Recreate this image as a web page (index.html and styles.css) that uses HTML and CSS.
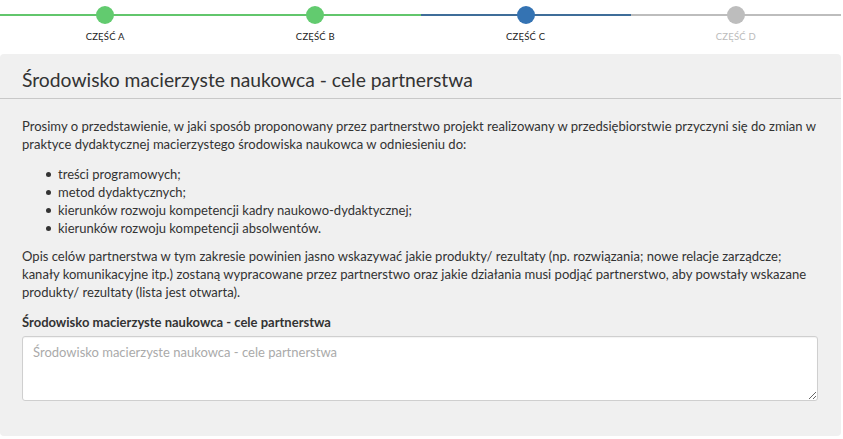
FILE: index.html
```html
<!DOCTYPE html>
<html lang="pl">
<head>
<meta charset="utf-8">
<link rel="stylesheet" href="styles.css">
</head>
<body>
<div class="stepper">
  <div class="step done"><div class="track"><span class="dot"></span></div><div class="label">CZĘŚĆ A</div></div>
  <div class="step done"><div class="track"><span class="dot"></span></div><div class="label">CZĘŚĆ B</div></div>
  <div class="step active"><div class="track"><span class="dot"></span></div><div class="label">CZĘŚĆ C</div></div>
  <div class="step todo"><div class="track"><span class="dot"></span></div><div class="label">CZĘŚĆ D</div></div>
</div>
<div class="panel">
  <div class="panel-head"><h2>Środowisko macierzyste naukowca - cele partnerstwa</h2></div>
  <div class="panel-body">
    <p>Prosimy o przedstawienie, w jaki sposób proponowany przez partnerstwo projekt realizowany w przedsiębiorstwie przyczyni się do zmian w praktyce dydaktycznej macierzystego środowiska naukowca w odniesieniu do:</p>
    <ul>
      <li>treści programowych;</li>
      <li>metod dydaktycznych;</li>
      <li>kierunków rozwoju kompetencji kadry naukowo-dydaktycznej;</li>
      <li>kierunków rozwoju kompetencji absolwentów.</li>
    </ul>
    <p>Opis celów partnerstwa w tym zakresie powinien jasno wskazywać jakie produkty/ rezultaty (np. rozwiązania; nowe relacje zarządcze; kanały komunikacyjne itp.) zostaną wypracowane przez partnerstwo oraz jakie działania musi podjąć partnerstwo, aby powstały wskazane produkty/ rezultaty (lista jest otwarta).</p>
    <label class="field-label" for="cele">Środowisko macierzyste naukowca - cele partnerstwa</label>
    <textarea id="cele" class="field" placeholder="Środowisko macierzyste naukowca - cele partnerstwa"></textarea>
  </div>
</div>
</body>
</html>
```
FILE: styles.css
```css
* { box-sizing: border-box; }
html, body { margin: 0; padding: 0; background: #fff; }
body {
  font-family: Lato, "Open Sans", sans-serif;
  color: #333;
  font-size: 13px;
  width: 841px;
}
.stepper {
  display: grid;
  grid-template-columns: repeat(4, 1fr);
  height: 54px;
}
.step { display: flex; flex-direction: column; align-items: center; }
.track {
  position: relative;
  width: 100%;
  height: 30px;
  display: flex;
  align-items: center;
  justify-content: center;
}
.track::before {
  content: "";
  position: absolute;
  left: 0; right: 0; top: 14px;
  height: 2px;
  background: var(--line);
}
.dot {
  position: relative;
  width: 18px; height: 18px;
  border-radius: 50%;
  background: var(--dot);
}
.done { --line: #62c66c; --dot: #62cb6f; }
.active { --line: #3f6d99; --dot: #3473b3; }
.todo { --line: #bdbdbd; --dot: #bdbdbd; }
.label {
  font-size: 9.5px;
  letter-spacing: 0.2px;
  color: #222;
  margin-top: 1px;
}
.todo .label { color: #bbb; }
.panel {
  background: #f0f0f0;
  border-radius: 4px;
  height: 382px;
}
.panel-head {
  border-bottom: 1px solid #c8c8c8;
  padding: 14px 22px 0;
  height: 45px;
}
.panel-head h2 {
  margin: 0;
  font-weight: 400;
  font-size: 19.3px;
  line-height: 24px;
  color: #333;
}
.panel-body { padding: 18px 22px 0; }
.panel-body p { margin: 0 0 10px; line-height: 18px; font-size: 13.05px; }
.panel-body ul { margin: 12px 0 10px; padding-left: 36px; line-height: 18px; list-style: none; }
.panel-body li { position: relative; }
.panel-body li::before {
  content: "";
  position: absolute;
  left: -12px; top: 7px;
  width: 5px; height: 5px;
  border-radius: 50%;
  background: #333;
}
.field-label {
  display: block;
  font-weight: 700;
  margin: 12px 0 5px;
  line-height: 18px;
}
.field {
  display: block;
  width: 796px;
  height: 65px;
  border: 1px solid #cfcfcf;
  border-radius: 3px;
  background: #fff;
  padding: 7px 10px;
  font: 13px Lato, sans-serif;
  color: #333;
  box-shadow: inset 0 1px 1px rgba(0,0,0,0.05);
}
.field::placeholder { color: #aaa; }
```
